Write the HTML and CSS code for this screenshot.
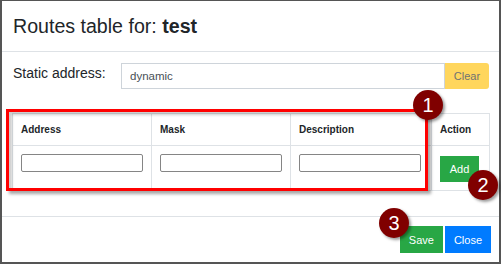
FILE: index.html
```html
<!DOCTYPE html>
<html lang="en">
<head>
  <meta charset="UTF-8" />
  <title>Routes table</title>
  <link rel="stylesheet" href="styles.css">
</head>
<body>

<div class="modal">
  <div class="modal-header">
    <h5 class="modal-title">Routes table for: <b>test</b></h5>
  </div>

  <div class="modal-body">
    <div class="form-row">
      <label for="staticAddr">Static address:</label>
      <div class="input-group">
        <input type="text" id="staticAddr" class="addr-input" value="dynamic" />
        <button class="btn btn-warning" disabled>Clear</button>
      </div>
    </div>

    <table class="routes">
      <colgroup>
        <col class="col-addr">
        <col class="col-mask">
        <col class="col-desc">
        <col class="col-action">
      </colgroup>
      <thead>
        <tr>
          <th>Address</th>
          <th>Mask</th>
          <th>Description</th>
          <th>Action</th>
        </tr>
      </thead>
      <tbody>
        <tr>
          <td><input type="text" class="cell-input" /></td>
          <td><input type="text" class="cell-input" /></td>
          <td><input type="text" class="cell-input" /></td>
          <td><button class="btn btn-success btn-add">Add</button></td>
        </tr>
      </tbody>
    </table>
  </div>

  <div class="modal-footer">
    <button class="btn btn-success">Save</button>
    <button class="btn btn-primary">Close</button>
  </div>
</div>

<!-- annotations -->
<div class="mark-box"></div>
<div class="step step-1">1</div>
<div class="step step-2">2</div>
<div class="step step-3">3</div>

</body>
</html>
```

FILE: styles.css
```css
body {
  font-family: 'Liberation Sans', Arial, sans-serif;
  margin: 0; padding: 0;
  background-color: #555;
  color: #212529;
  width: 501px;
  height: 264px;
  overflow: hidden;
  position: relative;
}
.modal {
  background: #fff;
  margin: 1px 2px 0 2px;
  height: 261px;
  display: flex;
  flex-direction: column;
}
.modal-header {
  padding: 10px 11px;
  border-bottom: 1px solid #dee2e6;
}
.modal-title {
  margin: 0;
  font-size: 19.6px;
  font-weight: normal;
  line-height: 30px;
}
.modal-body {
  padding: 11px 10px 25px;
}
.form-row {
  display: grid;
  grid-template-columns: 109px 1fr;
  margin-bottom: 24px;
}
.form-row label {
  font-size: 14px;
  line-height: 18px;
  padding: 1px 0 0 1px;
}
.input-group {
  display: flex;
  height: 26px;
}
.addr-input {
  flex: 1;
  min-width: 0;
  margin: 0;
  height: 26px;
  box-sizing: border-box;
  border: 1px solid #ced4da;
  border-radius: 0;
  padding: 0 8px;
  font-family: inherit;
  font-size: 11.5px;
  color: #495057;
  outline: none;
}
.btn {
  font-family: inherit;
  border: none;
  border-radius: 0;
  padding: 0 9px;
  font-size: 11px;
  color: #fff;
  cursor: pointer;
}
.btn-warning {
  background-color: #ffc107;
  color: #212529;
  width: 44px;
  padding: 0;
  border-radius: 0 3px 3px 0;
}
.btn:disabled {
  opacity: 0.65;
  cursor: default;
}
.btn-success {
  background-color: #28a745;
}
.btn-primary {
  background-color: #007bff;
}
.routes {
  width: 477px;
  table-layout: fixed;
  border-collapse: collapse;
  font-size: 10px;
}
.col-addr { width: 139px; }
.col-mask { width: 139px; }
.col-desc { width: 141px; }
.col-action { width: 58px; }
.routes th, .routes td {
  border: 1px solid #dee2e6;
  text-align: left;
  vertical-align: top;
}
.routes th {
  padding: 8px 8px;
  line-height: 15px;
  font-weight: bold;
}
.routes td {
  padding: 8px 8px 8px;
}
.cell-input {
  display: block;
  width: 122px;
  height: 18px;
  margin: 0;
  box-sizing: border-box;
  border: 1px solid #858585;
  border-radius: 2px;
  padding: 1px 2px;
  font-size: 11px;
}
.btn-add {
  display: block;
  height: 26px;
  width: 39px;
  padding: 0;
  margin-top: 2px;
}
.modal-footer {
  border-top: 1px solid #dee2e6;
  padding: 9px 8px 9px;
  display: flex;
  justify-content: flex-end;
  gap: 2px;
}
.modal-footer .btn {
  height: 27px;
}

/* annotations over the screenshot */
.mark-box {
  position: absolute;
  left: 6px; top: 109px;
  width: 422px; height: 82px;
  box-sizing: border-box;
  border: 3px solid #ff0000;
  box-shadow: 3px 3px 3px rgba(0,0,0,0.35), inset 3px 3px 3px rgba(0,0,0,0.2);
}
.step {
  position: absolute;
  width: 30px; height: 30px;
  border-radius: 50%;
  background-color: #800000;
  color: #fff;
  font-size: 20px;
  line-height: 30px;
  text-align: center;
  box-shadow: 2px 2px 3px rgba(0,0,0,0.4);
}
.step-1 { left: 413px; top: 90px; }
.step-2 { left: 468px; top: 170px; }
.step-3 { left: 379px; top: 208px; }
```
